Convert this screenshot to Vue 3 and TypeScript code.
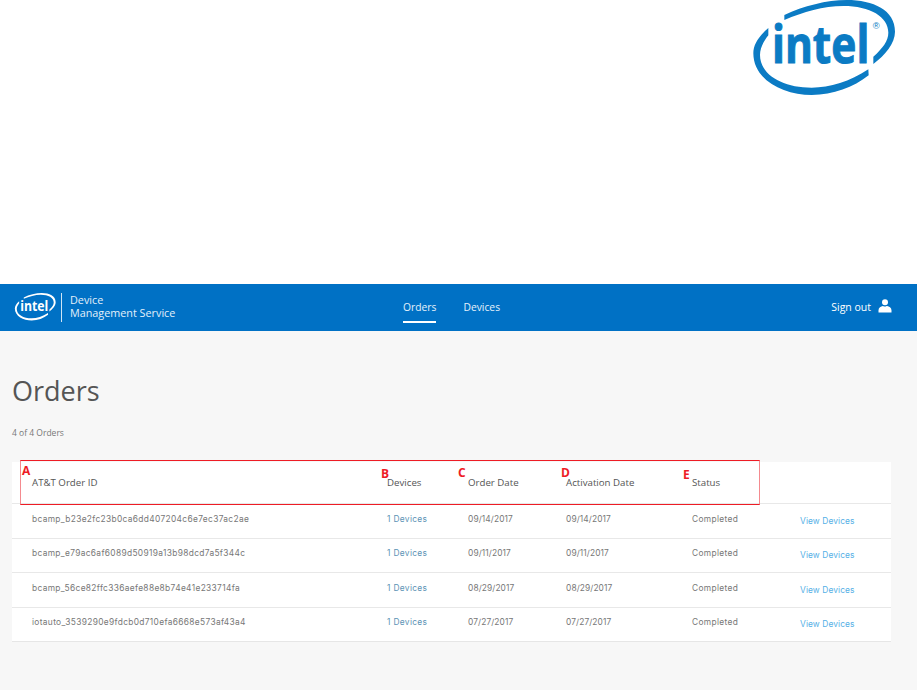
<script setup lang="ts">
interface Order { id: string; devices: string; ordered: string; activated: string; status: string }
const orders: Order[] = [
  { id: 'bcamp_b23e2fc23b0ca6dd407204c6e7ec37ac2ae', devices: '1 Devices', ordered: '09/14/2017', activated: '09/14/2017', status: 'Completed' },
  { id: 'bcamp_e79ac6af6089d50919a13b98dcd7a5f344c', devices: '1 Devices', ordered: '09/11/2017', activated: '09/11/2017', status: 'Completed' },
  { id: 'bcamp_56ce82ffc336aefe88e8b74e41e233714fa', devices: '1 Devices', ordered: '08/29/2017', activated: '08/29/2017', status: 'Completed' },
  { id: 'iotauto_3539290e9fdcb0d710efa6668e573af43a4', devices: '1 Devices', ordered: '07/27/2017', activated: '07/27/2017', status: 'Completed' },
]
const marks = [
  { key: 'A', cls: 'm-a' },
  { key: 'B', cls: 'm-b' },
  { key: 'C', cls: 'm-c' },
  { key: 'D', cls: 'm-d' },
  { key: 'E', cls: 'm-e' },
]
</script>

<template>
  <div class="page">
    <header class="masthead">
      <svg class="big-logo" viewBox="0 0 531 300" aria-label="Intel logo">
        <path class="blue" d="M133 45C190 18 260 0 320 0C400 0 465 30 465 95C465 130 435 165 400 192L400 170C428 145 445 122 445 98C445 50 390 18 310 18C250 18 190 36 133 60Z" />
        <path class="blue" d="M85 84C55 110 40 135 40 160C40 240 130 285 215 285C280 285 340 262 386 226L385 208C330 245 270 263 215 263C130 263 60 225 60 165C60 145 70 125 85 106Z" />
        <text class="big-word" x="96" y="190" textLength="292" lengthAdjust="spacingAndGlyphs">intel</text>
        <text class="reg" x="398" y="86">®</text>
      </svg>
    </header>

    <nav class="navbar">
      <div class="brand">
        <svg class="nav-logo" viewBox="0 0 531 300" aria-label="Intel logo">
          <path class="white" d="M133 45C190 18 260 0 320 0C400 0 465 30 465 95C465 130 435 165 400 192L400 170C428 145 445 122 445 98C445 50 390 18 310 18C250 18 190 36 133 60Z" />
          <path class="white" d="M85 84C55 110 40 135 40 160C40 240 130 285 215 285C280 285 340 262 386 226L385 208C330 245 270 263 215 263C130 263 60 225 60 165C60 145 70 125 85 106Z" />
          <text class="nav-word" x="96" y="190" textLength="292" lengthAdjust="spacingAndGlyphs">intel</text>
        </svg>
        <span class="divider"></span>
        <div class="brand-name">
          <span>Device</span>
          <span>Management Service</span>
        </div>
      </div>
      <div class="links">
        <a class="link active">Orders</a>
        <a class="link">Devices</a>
      </div>
      <div class="signout">
        <span>Sign out</span>
        <svg class="user" viewBox="0 0 14 14" aria-hidden="true">
          <circle cx="7" cy="3.3" r="3" />
          <path d="M0.5 13.5V11.2C0.5 8.8 3 7.4 4.8 7.1C5.5 7.7 8.5 7.7 9.2 7.1C11 7.4 13.5 8.8 13.5 11.2V13.5Z" />
        </svg>
      </div>
    </nav>

    <main class="content">
      <h1>Orders</h1>
      <p class="count">4 of 4 Orders</p>
      <section class="card">
        <div class="row head">
          <div>AT&amp;T Order ID</div>
          <div>Devices</div>
          <div>Order Date</div>
          <div>Activation Date</div>
          <div>Status</div>
          <div></div>
        </div>
        <div v-for="o in orders" :key="o.id" class="row body">
          <div class="wide">{{ o.id }}</div>
          <div class="dev wide">{{ o.devices }}</div>
          <div class="date">{{ o.ordered }}</div>
          <div class="date">{{ o.activated }}</div>
          <div class="wide">{{ o.status }}</div>
          <a class="view">View Devices</a>
        </div>
        <div class="annot"></div>
        <span v-for="m in marks" :key="m.key" class="mark" :class="m.cls">{{ m.key }}</span>
      </section>
    </main>
  </div>
</template>

<style scoped>
.page {
  width: 917px;
  height: 690px;
  overflow: hidden;
  background: #f7f7f7;
  font-family: "Open Sans", sans-serif;
  color: #555;
}
.masthead {
  height: 284px;
  background: #fff;
  display: flex;
  justify-content: flex-end;
}
.big-logo {
  width: 177px;
  height: 100px;
  display: block;
}
.blue { fill: #0b7bc4; }
.white { fill: #fff; }
.reg {
  font-family: "Liberation Sans", sans-serif;
  font-size: 28px;
  fill: #0b7bc4;
}
.big-word {
  font-family: "Open Sans", sans-serif;
  font-weight: 700;
  font-size: 155px;
  fill: #0b7bc4;
  stroke: #0b7bc4;
  stroke-width: 3;
}
.nav-word {
  font-family: "Open Sans", sans-serif;
  font-weight: 700;
  font-size: 155px;
  fill: #fff;
}
.navbar {
  height: 47px;
  background: #0071c5;
  display: flex;
  align-items: center;
  color: #fff;
}
.brand {
  width: 403px;
  display: flex;
  align-items: center;
  padding: 0 0 1px 11px;
  box-sizing: border-box;
}
.nav-logo {
  width: 51px;
  height: 29px;
  display: block;
}
.divider {
  width: 1px;
  height: 29px;
  background: #cfe5f5;
  margin-left: -1px;
}
.brand-name {
  margin: -3px 0 0 8px;
  display: flex;
  flex-direction: column;
  font-size: 10.8px;
  line-height: 13px;
  color: #e3f0fa;
}
.links {
  display: flex;
  gap: 27px;
  font-size: 10.3px;
}
.link {
  height: 21px;
  padding-top: 6px;
  line-height: 14px;
  color: #e6f2fb;
  margin-top: 2px;
}
.link.active {
  border-bottom: 2px solid #fff;
}
.signout {
  margin-left: auto;
  margin-right: 25px;
  display: flex;
  align-items: center;
  gap: 7px;
  font-size: 10.5px;
  line-height: 14px;
  padding-bottom: 1px;
}
.user {
  width: 14px;
  height: 14px;
  fill: #fff;
  margin-top: -2px;
}
.content {
  padding: 0 26px 0 12px;
}
h1 {
  margin: 0;
  padding-top: 41px;
  font-size: 27px;
  line-height: 37px;
  font-weight: 400;
  color: #555;
}
.count {
  margin: 18px 0 0;
  font-size: 8.5px;
  line-height: 12px;
  color: #777;
}
.card {
  position: relative;
  margin-top: 23px;
  background: #fff;
  border-bottom: 1px solid #e6e6e6;
}
.row {
  display: grid;
  grid-template-columns: 355px 81px 98px 126px 108px 1fr;
  padding-left: 20px;
  align-items: center;
  box-sizing: border-box;
}
.head {
  height: 41px;
  font-size: 9.7px;
  color: #555;
  padding-bottom: 1px;
}
.body {
  height: 34.5px;
  border-top: 1px solid #e8e8e8;
  font-family: Inter, sans-serif;
  font-size: 8.4px;
  color: #777;
  padding-bottom: 4px;
}
.wide { letter-spacing: 0.33px; }
.date { letter-spacing: 0.1px; }
.dev { color: #5c93b5; }
.view {
  color: #55b0e6;
  padding-top: 4px;
  letter-spacing: 0.1px;
}
.annot {
  position: absolute;
  left: 8px;
  top: -2px;
  width: 740px;
  height: 45px;
  border: 1px solid #ee1c25;
  border-left-color: #f48a8f;
  border-right-color: #f48a8f;
  box-sizing: border-box;
}
.mark {
  position: absolute;
  font-weight: 700;
  font-size: 12px;
  line-height: 12px;
  color: #ee1c25;
}
.m-a { left: 10px; top: 3px; }
.m-b { left: 369px; top: 6px; }
.m-c { left: 446px; top: 5px; }
.m-d { left: 549px; top: 5px; }
.m-e { left: 671px; top: 7px; }
</style>
